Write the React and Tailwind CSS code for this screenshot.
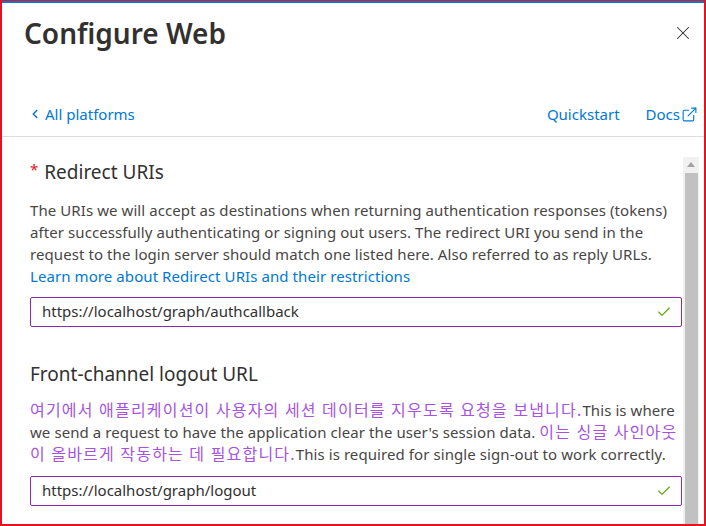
import React from 'react';
import { X, ChevronLeft, ExternalLink, Check } from 'lucide-react';

const font = { fontFamily: '"Noto Sans", "Noto Sans CJK KR", sans-serif' };

function UrlInput({ value }) {
    return (
        <div className="flex h-[30px] items-center justify-between rounded-[2px] border border-[#8a2da5] pl-[11px] pr-[9px]">
            <span className="text-[15px] text-[#323130]">{value}</span>
            <Check className="h-[16px] w-[16px] text-[#57a300]" strokeWidth={1.6} />
        </div>
    );
}

// korean part is wider in the original font, so stretch it a bit
function Ko({ children }) {
    return <span className="text-[16px] leading-[16px] tracking-[1.2px] text-[#a752e0]">{children}</span>;
}

export default function App() {
    return (
        <div style={font} className="h-[526px] w-[706px] overflow-hidden border-x-2 border-b-2 border-t border-[#e81123] bg-white">
            <div className="flex h-full flex-col border-t-2 border-[#0078d4]">
                {/* header */}
                <div className="flex items-start justify-between pl-[22px] pr-[10px] pt-[10px]">
                    <h1 className="text-[28px] font-semibold leading-[40px] text-[#323130]">Configure Web</h1>
                    <X className="mt-[9px] h-[22px] w-[22px] text-[#323130]" strokeWidth={1.1} />
                </div>
                <div className="mt-[50px] flex items-center justify-between pl-[26px] pr-[6px] text-[15px] text-[#0078d4]">
                    <div className="flex items-center gap-[3px]">
                        <ChevronLeft className="h-[14px] w-[14px]" strokeWidth={2.5} />
                        <span>All platforms</span>
                    </div>
                    <div className="flex items-center gap-[26px]">
                        <span>Quickstart</span>
                        <span className="flex items-center gap-[1px]">
                            Docs
                            <ExternalLink className="h-[17px] w-[17px]" strokeWidth={1.6} />
                        </span>
                    </div>
                </div>
                <div className="mt-[10px] border-b border-[#dcdcdc]"></div>

                <div className="mt-[20px] flex min-h-0 flex-1">
                    {/* content */}
                    <div className="flex-1 pl-[28px] pr-[1px]">
                        <h2 className="flex items-start text-[19px] leading-[30px] text-[#323130]">
                            <span className="mr-[6px] mt-[-3px] text-[15px] text-[#e81123]">*</span>Redirect URIs
                        </h2>
                        <p className="mt-[12px] whitespace-nowrap text-[15px] leading-[22px] tracking-[0.08px] text-[#484644]">
                            The URIs we will accept as destinations when returning authentication responses (tokens)<br />
                            after successfully authenticating or signing out users. The redirect URI you send in the<br />
                            request to the login server should match one listed here. Also referred to as reply URLs.<br />
                            <span className="text-[#0078d4]">Learn more about Redirect URIs and their restrictions</span>
                        </p>
                        <div className="mt-[10px]">
                            <UrlInput value="https://localhost/graph/authcallback" />
                        </div>

                        <h2 className="mt-[32px] text-[19px] leading-[30px] text-[#323130]">Front-channel logout URL</h2>
                        <p className="mt-[10px] whitespace-nowrap text-[15px] leading-[22px] tracking-[0.08px] text-[#484644]">
                            <Ko>여기에서 애플리케이션이 사용자의 세션 데이터를 지우도록 요청을 보냅니다.</Ko>This is where<br />
                            we send a request to have the application clear the user's session data. <Ko>이는 싱글 사인아웃</Ko><br />
                            <Ko>이 올바르게 작동하는 데 필요합니다.</Ko>This is required for single sign-out to work correctly.
                        </p>
                        <div className="mt-[11px]">
                            <UrlInput value="https://localhost/graph/logout" />
                        </div>
                    </div>

                    {/* scrollbar */}
                    <div className="mr-[5px] flex w-[16px] flex-col items-center bg-[#f1f1f1]">
                        <div className="mt-[5px] h-0 w-0 border-x-[4px] border-b-[5px] border-x-transparent border-b-[#a3a3a3]"></div>
                        <div className="mt-[6px] w-[13px] flex-1 bg-[#c1c1c1]"></div>
                    </div>
                </div>
            </div>
        </div>
    );
}
